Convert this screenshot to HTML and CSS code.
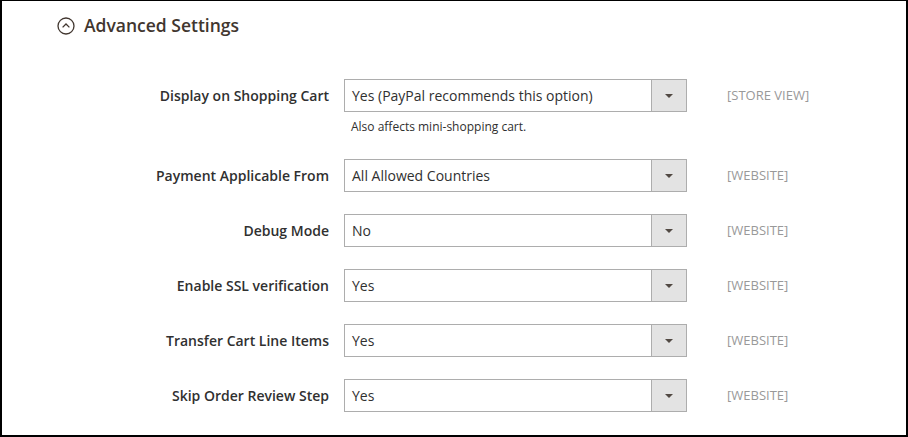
FILE: index.html
```html
<!DOCTYPE html>
<html>
<head>
<meta charset="utf-8">
<link rel="stylesheet" href="styles.css">
</head>
<body>
<div class="frame">
  <div class="section-title">
    <span class="toggle">
      <svg width="18" height="18" viewBox="0 0 18 18"><circle cx="9" cy="9" r="8" fill="none" stroke="#41362f" stroke-width="1.3"/><path d="M5.6 10.4 L9 7 L12.4 10.4" fill="none" stroke="#41362f" stroke-width="1.3"/></svg>
    </span>
    <span class="title">Advanced Settings</span>
  </div>
  <div class="fields">
    <div class="row">
      <label class="label">Display on Shopping Cart</label>
      <div class="control">
        <div class="select"><span class="value">Yes (PayPal recommends this option)</span><span class="arrow"></span></div>
        <div class="note">Also affects mini-shopping cart.</div>
      </div>
      <div class="scope">[STORE VIEW]</div>
    </div>
    <div class="row">
      <label class="label">Payment Applicable From</label>
      <div class="control">
        <div class="select"><span class="value">All Allowed Countries</span><span class="arrow"></span></div>
      </div>
      <div class="scope">[WEBSITE]</div>
    </div>
    <div class="row">
      <label class="label">Debug Mode</label>
      <div class="control">
        <div class="select"><span class="value">No</span><span class="arrow"></span></div>
      </div>
      <div class="scope">[WEBSITE]</div>
    </div>
    <div class="row">
      <label class="label">Enable SSL verification</label>
      <div class="control">
        <div class="select"><span class="value">Yes</span><span class="arrow"></span></div>
      </div>
      <div class="scope">[WEBSITE]</div>
    </div>
    <div class="row">
      <label class="label">Transfer Cart Line Items</label>
      <div class="control">
        <div class="select"><span class="value">Yes</span><span class="arrow"></span></div>
      </div>
      <div class="scope">[WEBSITE]</div>
    </div>
    <div class="row">
      <label class="label">Skip Order Review Step</label>
      <div class="control">
        <div class="select"><span class="value">Yes</span><span class="arrow"></span></div>
      </div>
      <div class="scope">[WEBSITE]</div>
    </div>
  </div>
</div>
</body>
</html>
```
FILE: styles.css
```css
html, body {
  margin: 0;
  padding: 0;
  background: #fff;
}
body {
  font-family: "Open Sans", "Liberation Sans", sans-serif;
  color: #303030;
}
.frame {
  width: 904px;
  height: 434px;
  border-style: solid;
  border-color: #000;
  border-width: 1px 2px 2px 2px;
  overflow: hidden;
}
.section-title {
  display: flex;
  align-items: center;
  gap: 9px;
  padding: 13px 0 0 55px;
  height: 23px;
}
.toggle {
  display: flex;
  width: 18px;
  height: 18px;
}
.title {
  font-size: 17.5px;
  font-weight: 600;
  color: #41362f;
  line-height: 23px;
}
.fields {
  padding-top: 42px;
}
.row {
  display: grid;
  grid-template-columns: 327px 343px auto;
  column-gap: 15px;
  align-items: start;
  margin-bottom: 22px;
}
.label {
  text-align: right;
  font-size: 14px;
  font-weight: 600;
  line-height: 33px;
  color: #303030;
}
.select {
  height: 31px;
  border: 1px solid #adadad;
  display: flex;
  align-items: center;
  background: #fff;
}
.value {
  flex: 1;
  padding-left: 7px;
  font-size: 14px;
  line-height: 31px;
  color: #303030;
}
.arrow {
  width: 34px;
  height: 31px;
  background: #e3e3e3;
  border-left: 1px solid #adadad;
  position: relative;
}
.arrow::after {
  content: "";
  position: absolute;
  left: 13px;
  top: 14px;
  border-left: 4px solid transparent;
  border-right: 4px solid transparent;
  border-top: 4px solid #514943;
}
.note {
  font-size: 12px;
  line-height: 21px;
  margin-top: 4px;
  padding-left: 7px;
  color: #303030;
}
.scope {
  padding-left: 25px;
  font-size: 13px;
  line-height: 33px;
  color: #999;
}
```
